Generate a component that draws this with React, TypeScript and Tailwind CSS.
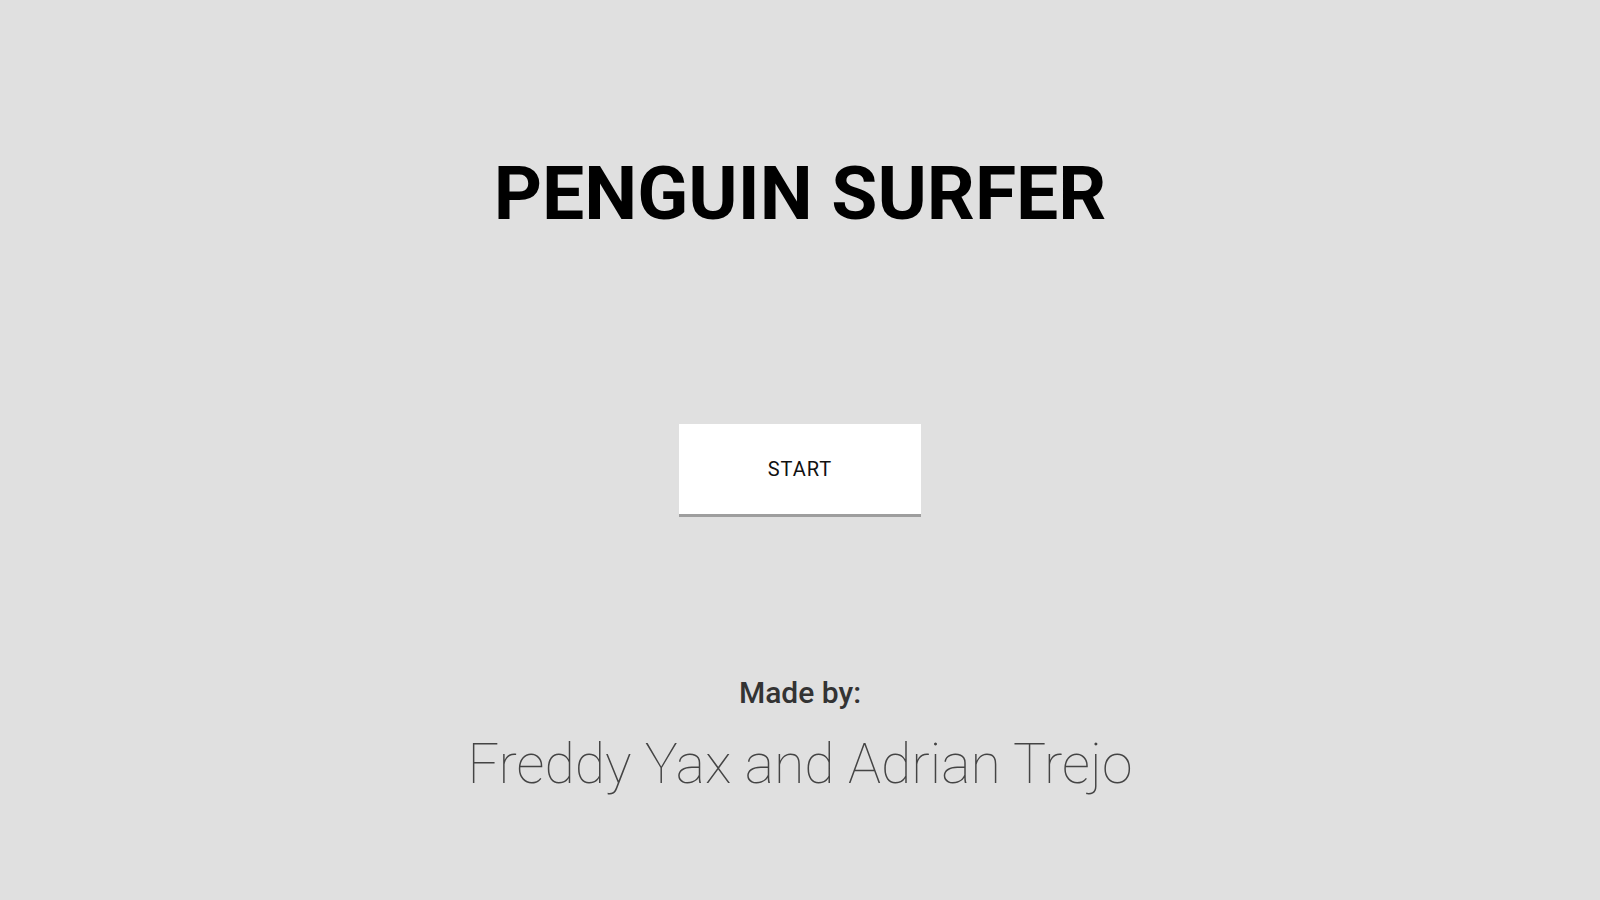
const App = () => {
    return (
        <div className="min-h-screen w-full bg-[#e0e0e0] flex flex-col items-center font-['Roboto',sans-serif]">
            <h1 className="mt-[156px] text-[75px] leading-none font-bold text-black">
                PENGUIN SURFER
            </h1>

            <button
                type="button"
                className="mt-[193px] w-[242px] h-[93px] bg-white border-b-[3px] border-[#9e9e9e] text-[20px] text-[#111] tracking-[0.05em]"
            >
                START
            </button>

            <p className="mt-[161px] text-[30px] leading-none font-medium text-[#333]">
                Made by:
            </p>
            <p className="mt-[29px] text-[55.4px] leading-none font-thin text-[#444]">
                Freddy Yax and Adrian Trejo
            </p>
        </div>
    )
}

export default App
